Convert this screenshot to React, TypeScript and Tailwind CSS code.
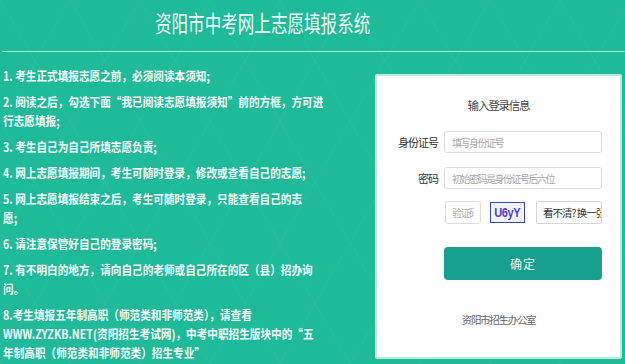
import React from "react";

const font = { fontFamily: '"Noto Sans CJK SC", "Noto Sans", sans-serif' };

function Pattern() {
  const lines: React.ReactElement[] = [];
  for (let i = -6; i < 14; i++) {
    const x = i * 70;
    lines.push(<line key={"a" + i} x1={x} y1={0} x2={x + 210} y2={364} />);
    lines.push(<line key={"b" + i} x1={x + 210} y1={0} x2={x} y2={364} />);
  }
  return (
    <svg className="absolute inset-0 pointer-events-none" width="625" height="364" viewBox="0 0 625 364">
      <g stroke="#ffffff" strokeOpacity="0.05" strokeWidth="1" fill="none">
        {lines}
      </g>
    </svg>
  );
}

const items: string[][] = [
  ["1. 考生正式填报志愿之前，必须阅读本须知;"],
  ["2. 阅读之后，勾选下面\u201c我已阅读志愿填报须知\u201d前的方框，方可进", "行志愿填报;"],
  ["3. 考生自己为自己所填志愿负责;"],
  ["4. 网上志愿填报期间，考生可随时登录，修改或查看自己的志愿;"],
  ["5. 网上志愿填报结束之后，考生可随时登录，只能查看自己的志", "愿;"],
  ["6. 请注意保管好自己的登录密码;"],
  ["7. 有不明白的地方，请向自己的老师或自己所在的区（县）招办询", "问。"],
  [
    "8.考生填报五年制高职（师范类和非师范类），请查看",
    "WWW.ZYZKB.NET(资阳招生考试网)，中考中职招生版块中的\u201c五",
    "年制高职（师范类和非师范类）招生专业\u201d",
  ],
];

const inputCls =
  "h-[22px] border border-[#dcdcdc] rounded-[3px] px-[7px] text-[10px] tracking-[-1.5px] outline-none placeholder:text-[#a8a8a8]";

export default function App() {
  return (
    <div className="relative w-[625px] h-[364px] overflow-hidden bg-[#1fba97]" style={font}>
      <Pattern />
      <div className="relative">
        <div className="h-[51px] pl-[155px] pt-[7px]">
          <div className="inline-block origin-left scale-x-[0.72] whitespace-nowrap text-[23px] leading-[30px] text-[#eefbf7]">
            资阳市中考网上志愿填报系统
          </div>
        </div>
        <div className="ml-[2px] h-px bg-[#a6e8d7]" />
        <div className="flex">
          <div className="w-[375px] shrink-0 pl-[3px] pt-[14px]">
            <div className="w-[360px] origin-top-left scale-x-[0.85] text-[12.5px] leading-[19px] font-bold text-[#f4fcf9] flex flex-col gap-[7px]">
              {items.map((p, i) => (
                <div key={i} className="whitespace-nowrap">
                  {p.map((l, j) => (
                    <div key={j}>{l}</div>
                  ))}
                </div>
              ))}
            </div>
          </div>
          <div className="mt-[22px] w-[247px] h-[285px] shrink-0 bg-white border-2 border-[#b8ecde] rounded-[2px] flex flex-col">
            <div className="pt-[20px] text-center text-[11.5px] leading-[18px] tracking-[-1.2px] text-[#444]">输入登录信息</div>
            <div className="mt-[17px] flex items-center">
              <div className="w-[61px] text-right text-[11px] tracking-[-1px] text-[#333]">身份证号</div>
              <input readOnly placeholder="填写身份证号" className={"ml-[6px] w-[158px] " + inputCls} />
            </div>
            <div className="mt-[14px] flex items-center">
              <div className="w-[61px] text-right text-[11px] tracking-[-1px] text-[#333]">密码</div>
              <input readOnly placeholder="初始密码是身份证号后六位" className={"ml-[6px] w-[158px] " + inputCls} />
            </div>
            <div className="mt-[12px] flex items-center">
              <div className="w-[61px]" />
              <input
                readOnly
                placeholder="验证码"
                className="ml-[7px] w-[36px] h-[23px] border border-[#dcdcdc] rounded-[3px] px-[6px] text-[10px] tracking-[-1.5px] outline-none placeholder:text-[#b0b0b0]"
              />
              <div className="ml-[9px] w-[35px] h-[21px] border border-[#3344c8] bg-[#f3f3ff] flex items-center justify-center overflow-hidden">
                <span className="inline-block scale-x-[0.85] text-[13px] font-bold tracking-[-0.5px] text-[#4a3fd8]" style={{ fontFamily: '"Liberation Sans", Arial, sans-serif' }}>U6yY</span>
              </div>
              <div className="ml-[11px] w-[66px] h-[23px] border border-[#d6d6d6] rounded-[2px] overflow-hidden whitespace-nowrap pl-[6px] text-[10.5px] leading-[21px] tracking-[-1px] text-[#333]">
                看不清? 换一张
              </div>
            </div>
            <div className="mt-[23px] ml-[67px] w-[158px] h-[33px] rounded-[4px] bg-[#17a08e] flex items-center justify-center text-[12px] tracking-[1px] text-[#eefaf7]">
              确定
            </div>
            <div className="mt-[31px] text-center text-[10.5px] leading-[18px] tracking-[-1.3px] text-[#666]">资阳市招生办公室</div>
          </div>
        </div>
      </div>
    </div>
  );
}
